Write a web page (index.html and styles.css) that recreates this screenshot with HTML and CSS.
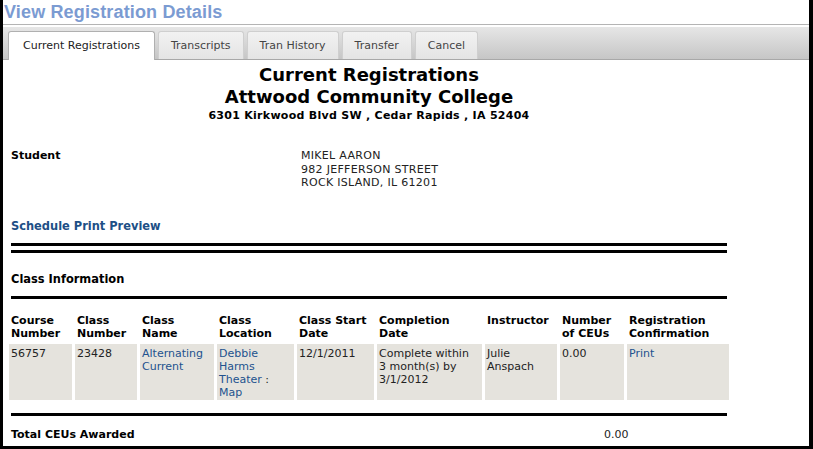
FILE: index.html
```html
<!DOCTYPE html>
<html lang="en">
<head>
	<meta charset="UTF-8">
	<title>View Registration Details</title>
	<link rel="stylesheet" href="styles.css">
</head>
<body>
	<div class="frame">
		<h1 class="page_title">View Registration Details</h1>
		<div class="tabbar">
			<ul class="tabs">
				<li class="tab active">Current Registrations</li>
				<li class="tab">Transcripts</li>
				<li class="tab">Tran History</li>
				<li class="tab">Transfer</li>
				<li class="tab">Cancel</li>
			</ul>
		</div>
		<div class="content">
			<div class="head">
				<div class="head_big">Current Registrations</div>
				<div class="head_big">Attwood Community College</div>
				<div class="head_addr">6301 Kirkwood Blvd SW , Cedar Rapids , IA 52404</div>
			</div>
			<div class="student">
				<div class="student_label">Student</div>
				<div class="student_addr">
					MIKEL AARON<br>
					982 JEFFERSON STREET<br>
					ROCK ISLAND, IL 61201
				</div>
			</div>
			<a class="print_link" href="#">Schedule Print Preview</a>
			<div class="rule"></div>
			<div class="rule rule_second"></div>
			<div class="section_title">Class Information</div>
			<div class="rule"></div>
			<table class="classes">
				<colgroup>
					<col style="width:63px">
					<col style="width:62px">
					<col style="width:74px">
					<col style="width:77px">
					<col style="width:77px">
					<col style="width:105px">
					<col style="width:72px">
					<col style="width:64px">
					<col style="width:102px">
				</colgroup>
				<thead>
					<tr>
						<th>Course Number</th>
						<th>Class Number</th>
						<th>Class Name</th>
						<th>Class Location</th>
						<th>Class Start Date</th>
						<th>Completion Date</th>
						<th>Instructor</th>
						<th>Number of CEUs</th>
						<th>Registration Confirmation</th>
					</tr>
				</thead>
				<tbody>
					<tr>
						<td>56757</td>
						<td>23428</td>
						<td><a href="#">Alternating Current</a></td>
						<td><a href="#">Debbie Harms Theater</a> : <a href="#">Map</a></td>
						<td>12/1/2011</td>
						<td class="completion">Complete within 3 month(s) by 3/1/2012</td>
						<td>Julie Anspach</td>
						<td>0.00</td>
						<td><a href="#">Print</a></td>
					</tr>
				</tbody>
			</table>
			<div class="rule rule_bottom"></div>
			<div class="total">
				<span class="total_label">Total CEUs Awarded</span>
				<span class="total_value">0.00</span>
			</div>
		</div>
	</div>
</body>
</html>
```

FILE: styles.css
```css
html,body{
	margin: 0;
	background: #000;
}
.frame{
	width: 813px;
	height: 449px;
	box-sizing: border-box;
	border-left: 3px solid #000;
	border-right: 4px solid #000;
	border-bottom: 3px solid #000;
	background: #fff;
	overflow: hidden;
	font-family: "DejaVu Sans", Verdana, sans-serif;
	font-size: 11px;
	color: #222;
}
.page_title{
	margin: 0;
	padding-left: 1px;
	height: 24px;
	line-height: 25px;
	font-family: "Liberation Sans", Arial, sans-serif;
	font-size: 18px;
	font-weight: bold;
	letter-spacing: 0.15px;
	color: #7b9bd2;
}
.tabbar{
	border-top: 1px solid #b4b4b4;
	padding-top: 2px;
}
.tabs{
	list-style: none;
	margin: 0;
	padding: 4px 0 0 5px;
	display: flex;
	gap: 3px;
	height: 28px;
	background: linear-gradient(#e6e6e6, #c6c6c6);
	border-bottom: 1px solid #a8a8a8;
}
.tab{
	height: 28px;
	line-height: 28px;
	padding: 0 12px;
	box-sizing: border-box;
	border: 1px solid #cfcfcf;
	border-bottom: none;
	border-radius: 3px 3px 0 0;
	background: linear-gradient(#f2f2f2, #e4e4e4);
	color: #444;
}
.tab.active{
	height: 29px;
	padding: 0 14px;
	background: #fff;
	border-color: #b0b0b0;
	color: #222;
}
.content{
	width: 716px;
	padding-left: 8px;
}
.head{
	text-align: center;
	color: #000;
	padding-top: 4px;
}
.head_big{
	font-size: 18px;
	font-weight: bold;
	line-height: 22px;
}
.head_addr{
	font-size: 11px;
	font-weight: bold;
	line-height: 15px;
	letter-spacing: 0.28px;
}
.student{
	display: flex;
	margin-top: 26px;
	line-height: 13.5px;
}
.student_label{
	width: 290px;
	font-weight: bold;
	color: #000;
}
.student_addr{
	letter-spacing: 0.3px;
}
.print_link{
	display: block;
	margin-top: 28px;
	font-family: "DejaVu Sans Condensed", "DejaVu Sans", sans-serif;
	font-stretch: condensed;
	font-size: 12.7px;
	font-weight: bold;
	color: #1d4f86;
	text-decoration: none;
	line-height: 16px;
}
a{
	color: #22528e;
	text-decoration: none;
}
.rule{
	height: 3px;
	background: #000;
	margin-top: 9px;
}
.rule_second{
	margin-top: 4px;
}
.section_title{
	margin-top: 18px;
	margin-bottom: 9px;
	font-family: "DejaVu Sans Condensed", "DejaVu Sans", sans-serif;
	font-stretch: condensed;
	font-size: 12.7px;
	font-weight: bold;
	color: #000;
	line-height: 16px;
}
.classes{
	table-layout: fixed;
	width: 726px;
	border-spacing: 3px;
	margin: 12px 0 0 -5px;
	line-height: 13px;
}
.classes th{
	text-align: left;
	vertical-align: top;
	padding: 0 2px 1px;
	font-weight: bold;
	color: #000;
}
.classes td{
	vertical-align: top;
	height: 52px;
	padding: 3px 2px 1px;
	background: #e5e3dd;
}
.classes td.completion{
	padding-right: 10px;
}
.rule_bottom{
	margin-top: 10px;
}
.total{
	display: flex;
	margin-top: 12px;
	line-height: 14px;
}
.total_label{
	width: 593px;
	font-weight: bold;
	color: #000;
}
```
